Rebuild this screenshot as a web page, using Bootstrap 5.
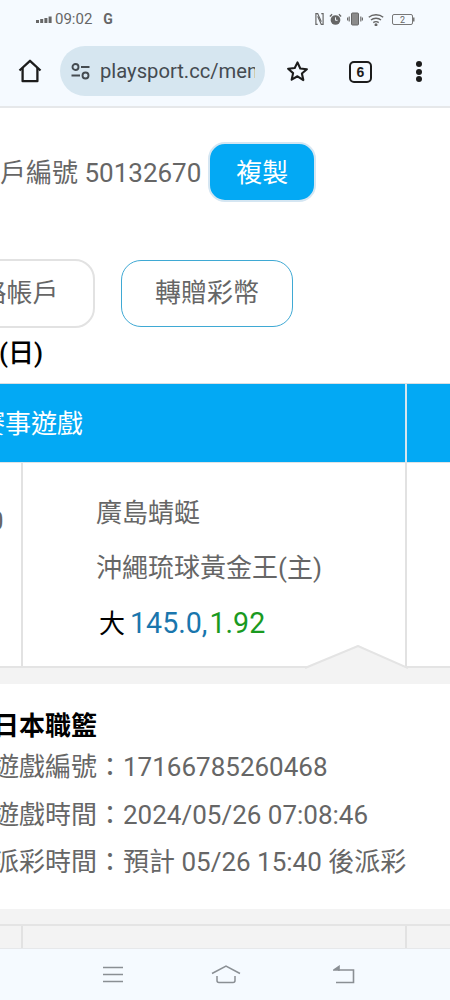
<!DOCTYPE html>
<html lang="zh-Hant">
<head>
    <meta charset="UTF-8">
    <title>playsport.cc</title>
    <meta name="viewport" content="width=device-width, initial-scale=1">
    <link href="https://cdn.jsdelivr.net/npm/bootstrap@5.3.0/dist/css/bootstrap.min.css" rel="stylesheet">
    <style>
        html, body { height: 100%; }
        body {
            width: 450px;
            height: 1000px;
            overflow: hidden;
            background: #fff;
            color: #666;
            font-family: Roboto, "Noto Sans CJK TC", sans-serif;
            font-size: 26px;
        }
        /* phone status bar + browser toolbar */
        .top-chrome { height: 108px; background: #f5faff; border-bottom: 2px solid #e6e8ea; flex: none; }
        .status-row { height: 38px; padding: 0 35px 0 36px; font-size: 15px; color: #666; }
        .status-time { margin-left: 3px; }
        .status-g { font-weight: 700; font-size: 14px; margin-left: 11px; }
        .status-icons { gap: 5px; }
        .status-batt { margin-left: 3px; }
        .tool-row { height: 50px; margin-top: 8px; }
        .home-btn { width: 60px; }
        .url-pill {
            width: 205px;
            height: 50px;
            border-radius: 25px;
            background: #d6e6f0;
            color: #444b50;
            font-size: 20.2px;
            overflow: hidden;
            white-space: nowrap;
            padding-left: 11px;
            flex: none;
        }
        .url-text { margin-left: 10px; width: 155px; overflow: hidden; }
        .star-btn { margin-left: 21px; }
        .tab-count {
            width: 23px; height: 22px; margin-left: 40px; margin-top: 1px;
            border: 2.5px solid #1c1c1c; border-radius: 5px;
            font: 700 14px "Liberation Sans", sans-serif; color: #1c1c1c;
        }
        .more-btn { margin-left: 44px; padding-top: 3px; }
        .more-btn i { display: block; width: 6px; height: 6px; border-radius: 50%; background: #1c1c1c; margin-bottom: 1.5px; }

        /* scrolled page */
        .page-view { height: 840px; flex: none; overflow: hidden; }
        .acct-row { height: 94px; padding-top: 34px; white-space: nowrap; margin-left: -26px; }
        .acct-text { margin-right: 7px; padding-top: 2px; }
        .copy-btn {
            width: 108px; height: 60px; padding: 2px 0 0;
            background: #03a9f4; color: #fff;
            border: 2px solid #d5e6f2; border-radius: 17px;
            font-size: 26px;
        }
        .action-row { margin-top: 57px; height: 69px; margin-left: -82px; gap: 26px; }
        .act-btn {
            height: 69px; padding: 0; background: #fff; color: #666; font-size: 26px;
            border-radius: 20px; white-space: nowrap;
        }
        .act-gray { width: 177px; border: 2px solid #e2e2e2; }
        .act-blue { width: 172px; height: 67px; border: 1px solid #3fa9d4; }
        .day-line { height: 55px; line-height: 50px; margin-left: -1px; color: #000; font-weight: 500; }

        .list-head { height: 80px; border-top: 1px solid #d9dfe3; border-bottom: 1px solid #dfe3e6; background: #03a9f4; color: #fff; }
        .cell-a { width: 23px; flex: none; overflow: hidden; border-right: 2px solid #e2e2e2; }
        .cell-b { width: 384px; flex: none; border-right: 2px solid #e2e2e2; }
        .list-head .cell-b { width: 407px; border-right-color: #d5e6ee; white-space: nowrap; }
        .head-title { margin-left: -21px; line-height: 80px; }
        .list-row { height: 205px; border-bottom: 2px solid #e4e4e4; position: relative; }
        .list-row .cell-a { line-height: 116px; white-space: nowrap; }
        .cell-zero { margin-left: -11px; }
        .cell-b-body { padding: 23px 0 0 73px; line-height: 55px; white-space: nowrap; }
        .pick-side { color: #000; margin: 0 5px 0 3px; }
        .pick-line { color: #1a76ad; font-size: 28.6px; }
        .pick-odds { color: #1a9a1f; font-size: 28.6px; margin-left: 2px; }
        .peak { position: absolute; left: 304px; top: 182px; }
        .gap-band { height: 16px; background: #f3f3f3; }
        .detail-box { height: 225px; padding-top: 25px; margin-left: -7px; white-space: nowrap; }
        .detail-title { color: #000; font-weight: 700; height: 35px; line-height: 35px; }
        .detail-line { height: 47.5px; line-height: 47.5px; }
        .next-band { height: 39px; padding-top: 15px; background: #f3f3f3; }
        .next-row { height: 24px; border-top: 2px solid #e4e4e4; }

        /* navigation bar */
        .bottom-nav { height: 52px; background: #f5faff; border-top: 1px solid #e6e8ea; flex: none; }
        .nav-menu { margin-left: 102px; }
        .nav-home { margin-left: 87px; }
        .nav-back { margin-left: 92px; }
    </style>
</head>

<body class="d-flex flex-column">

    <!-- status bar + toolbar -->
    <div class="top-chrome">
        <div class="status-row d-flex align-items-center justify-content-between">
            <div class="d-flex align-items-center">
                <svg width="16" height="9" viewBox="0 0 16 9" fill="#666"><rect x="0" y="5" width="3" height="3"/><rect x="4.2" y="4" width="3" height="4"/><rect x="8.4" y="3" width="3" height="5"/><rect x="12.6" y="1.5" width="3" height="6.5"/></svg>
                <span class="status-time">09:02</span>
                <span class="status-g">G</span>
            </div>
            <div class="d-flex align-items-center status-icons">
                <svg width="9" height="14" viewBox="0 0 10 14" fill="none" stroke="#666" stroke-width="1.3"><path d="M7 1h2v12H7L3 4"/><path d="M3 13H1V1h2l4 9"/></svg>
                <svg width="13" height="13" viewBox="0 0 15 14"><circle cx="7.5" cy="7.6" r="5.6" fill="#666"/><path d="M7.5 4.5v3.4h2.4" stroke="#f5faff" stroke-width="1.1" fill="none"/><path d="M1 3.6 3.6 1M14 3.6 11.4 1" stroke="#666" stroke-width="1.5"/></svg>
                <svg width="16" height="14" viewBox="0 0 16 14" fill="none" stroke="#666"><rect x="4.5" y="1" width="7" height="12" rx="1" fill="#8b8b8b"/><path d="M2.2 4.5v5M.6 5.5v3M13.8 4.5v5M15.4 5.5v3" stroke-width="1.1"/></svg>
                <svg width="16" height="13" viewBox="0 0 16 13" fill="none" stroke="#666" stroke-width="1.4"><path d="M.8 4.3c3.8-3.4 10.6-3.4 14.4 0M3 7c2.6-2.3 7.4-2.3 10 0M5.3 9.6c1.4-1.1 4-1.1 5.4 0"/><circle cx="8" cy="11.8" r=".8" fill="#666"/></svg>
                <svg class="status-batt" width="23" height="11" viewBox="0 0 23 11"><rect x=".5" y=".5" width="20" height="10" rx="1.5" fill="none" stroke="#777"/><rect x="21" y="3.5" width="1.5" height="4" fill="#777"/><text x="10.5" y="8.6" text-anchor="middle" font-family="Roboto, sans-serif" font-size="9" fill="#666">2</text></svg>
            </div>
        </div>
        <div class="tool-row d-flex align-items-center">
            <div class="home-btn d-flex justify-content-center">
                <svg width="24" height="24" viewBox="0 0 24 24" fill="none" stroke="#1c1c1c" stroke-width="2.3" stroke-linejoin="round"><path d="M1.5 11.5 12 1.8l10.5 9.7"/><path d="M4.6 9v13.2h14.8V9"/></svg>
            </div>
            <div class="url-pill d-flex align-items-center">
                <svg width="19" height="17" viewBox="0 0 19 17" fill="none" stroke="#444b50" stroke-width="1.9"><circle cx="4.5" cy="4" r="3"/><path d="M10 4h8.5M.5 12.5H9"/><circle cx="14.5" cy="12.5" r="3"/></svg>
                <div class="url-text">playsport.cc/menu</div>
            </div>
            <div class="star-btn d-flex">
                <svg width="23" height="22" viewBox="0 0 24 23" fill="none" stroke="#1c1c1c" stroke-width="2.2" stroke-linejoin="round"><path d="M12 2.5l2.9 6.4 6.9.7-5.2 4.6 1.5 6.8L12 17l-6.1 3.5 1.5-6.8-5.2-4.6 6.9-.7z"/></svg>
            </div>
            <div class="tab-count d-flex align-items-center justify-content-center">6</div>
            <div class="more-btn"><i></i><i></i><i></i></div>
        </div>
    </div>

    <!-- page, scrolled sideways so its left edge is cut -->
    <div class="page-view">
        <div class="acct-row d-flex align-items-center">
            <span class="acct-text">帳戶編號 50132670</span>
            <button type="button" class="btn copy-btn">複製</button>
        </div>
        <div class="action-row d-flex">
            <button type="button" class="btn act-btn act-gray">網路帳戶</button>
            <button type="button" class="btn act-btn act-blue align-self-center">轉贈彩幣</button>
        </div>
        <div class="day-line">(日)</div>

        <div class="list-head d-flex">
            <div class="cell-b"><div class="head-title">賽事遊戲</div></div>
        </div>
        <div class="list-row d-flex">
            <div class="cell-a"><span class="cell-zero">0</span></div>
            <div class="cell-b cell-b-body">
                <div>廣島蜻蜓</div>
                <div>沖繩琉球黃金王(主)</div>
                <div><span class="pick-side">大</span><span class="pick-line">145.0,</span><span class="pick-odds">1.92</span></div>
            </div>
            <svg class="peak" width="104" height="24" viewBox="0 0 104 24"><path d="M1 24 54 0l50 24z" fill="#f3f3f3"/><path d="M1 23 54 1l50 22" fill="none" stroke="#e4e4e4" stroke-width="2"/></svg>
        </div>
        <div class="gap-band"></div>
        <div class="detail-box">
            <div class="detail-title">日本職籃</div>
            <div class="detail-line">遊戲編號：17166785260468</div>
            <div class="detail-line">遊戲時間：2024/05/26 07:08:46</div>
            <div class="detail-line">派彩時間：預計 05/26 15:40 後派彩</div>
        </div>
        <div class="next-band">
            <div class="next-row d-flex">
                <div class="cell-a"></div>
                <div class="cell-b"></div>
            </div>
        </div>
    </div>

    <!-- phone navigation bar -->
    <div class="bottom-nav d-flex align-items-center">
        <svg class="nav-menu" width="22" height="17" viewBox="0 0 22 17" stroke="#8a8f94" stroke-width="1.5"><path d="M1 1.5h20M1 8.5h20M1 15.5h20"/></svg>
        <svg class="nav-home" width="30" height="19" viewBox="0 0 30 19" fill="none" stroke="#8a8f94" stroke-width="1.5"><path d="M1 8.5 15 1l14 7.5"/><path d="M6 11v4.5q0 2 2 2h14q2 0 2-2V11"/></svg>
        <svg class="nav-back" width="22" height="19" viewBox="0 0 22 19" fill="none" stroke="#8a8f94" stroke-width="1.6"><path d="M5 5h15.5v12.5H3"/><path d="M1 5 6 1.5v3.5z" fill="#8a8f94"/></svg>
    </div>
</body>
</html>
